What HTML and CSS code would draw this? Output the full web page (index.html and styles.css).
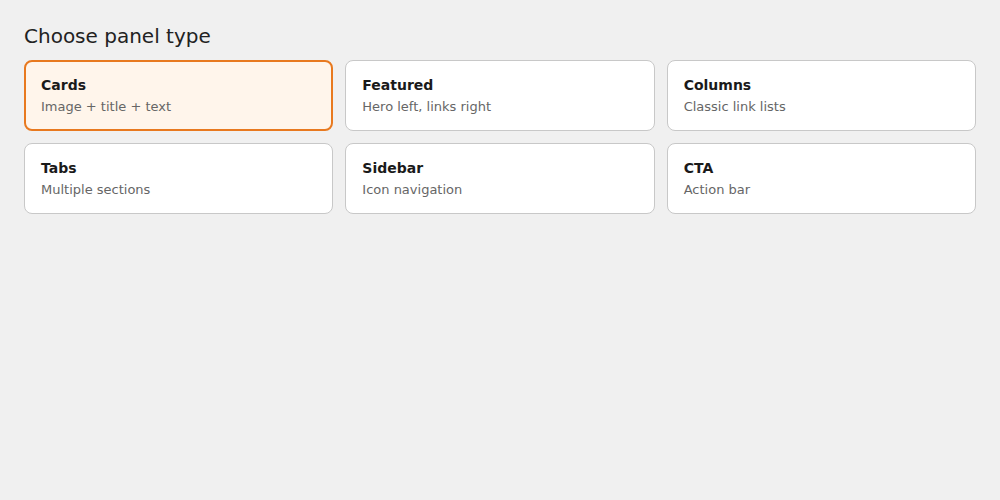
FILE: index.html
```html
<!DOCTYPE html>
<html>
<head>
<meta charset="utf-8">
<link rel="stylesheet" href="styles.css">
</head>
<body>
<main class="page">
  <h1 class="heading">Choose panel type</h1>
  <div class="grid">
    <div class="card selected"><div class="title">Cards</div><div class="desc">Image + title + text</div></div>
    <div class="card"><div class="title">Featured</div><div class="desc">Hero left, links right</div></div>
    <div class="card"><div class="title">Columns</div><div class="desc">Classic link lists</div></div>
    <div class="card"><div class="title">Tabs</div><div class="desc">Multiple sections</div></div>
    <div class="card"><div class="title">Sidebar</div><div class="desc">Icon navigation</div></div>
    <div class="card"><div class="title">CTA</div><div class="desc">Action bar</div></div>
  </div>
</main>
</body>
</html>
```
FILE: styles.css
```css
html, body {
  margin: 0;
  padding: 0;
  background: #f0f0f0;
  font-family: "DejaVu Sans", sans-serif;
}
.page {
  padding: 24px;
}
.heading {
  margin: 0 0 12px 0;
  font-size: 20px;
  font-weight: normal;
  color: #222;
  line-height: 24px;
}
.grid {
  display: grid;
  grid-template-columns: repeat(3, 1fr);
  gap: 12px;
}
.card {
  background: #fff;
  border: 1px solid #c8c8c8;
  border-radius: 8px;
  padding: 16px;
  height: 71px;
  box-sizing: border-box;
}
.card.selected {
  border: 2px solid #e8791f;
  background: #fff5eb;
  padding: 15px;
}
.title {
  font-size: 14px;
  font-weight: bold;
  color: #1a1a1a;
  line-height: 16px;
}
.desc {
  margin-top: 6px;
  font-size: 13px;
  color: #666;
  line-height: 16px;
}
```
